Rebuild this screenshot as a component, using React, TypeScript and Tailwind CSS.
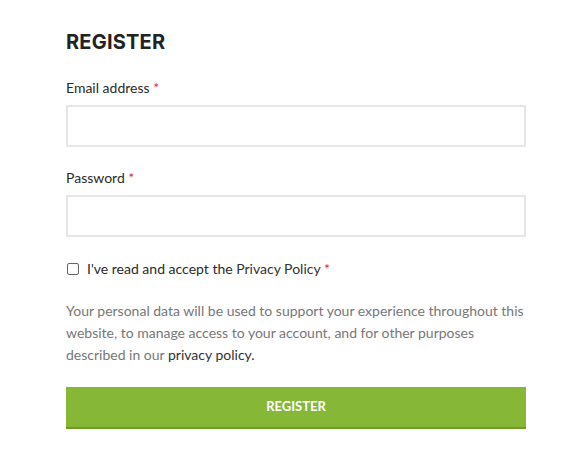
export default function App() {
  return (
    <div className="min-h-screen bg-white" style={{ fontFamily: "Lato, 'Open Sans', sans-serif" }}>
      <div className="ml-[66px] w-[460px] pt-[28px]">
        <h2
          className="text-[20px] font-bold leading-[28px] tracking-[0.2px] text-[#222]"
          style={{ fontFamily: "Inter, 'Noto Sans', sans-serif" }}
        >
          REGISTER
        </h2>

        <form className="mt-[22px]">
          <label className="block text-[14px] leading-[20px] text-[#2a2a2a]">
            Email address <span className="text-[#e0245e]">*</span>
          </label>
          <input
            type="email"
            className="mt-[7px] block h-[42px] w-full border-2 border-[#e6e6e6] bg-white px-3 outline-none"
          />

          <label className="mt-[21px] block text-[14px] leading-[20px] text-[#2a2a2a]">
            Password <span className="text-[#e0245e]">*</span>
          </label>
          <input
            type="password"
            className="mt-[7px] block h-[42px] w-full border-2 border-[#e6e6e6] bg-white px-3 outline-none"
          />

          <label className="mt-[22px] flex items-center gap-[8px] text-[14px] leading-[20px] text-[#2a2a2a]">
            <span className="ml-[1px] inline-block h-[12px] w-[12px] rounded-[2px] border border-[#666] bg-white" />
            <span>
              I've read and accept the <span className="text-[#333]">Privacy Policy</span>{" "}
              <span className="text-[#e0245e]">*</span>
            </span>
          </label>

          <p className="mt-[21px] text-[14px] leading-[22px] text-[#777]">
            Your personal data will be used to support your experience throughout this website, to manage access to
            your account, and for other purposes described in our <a className="text-[#333]">privacy policy.</a>
          </p>

          <button
            type="button"
            className="mt-[21px] block h-[42px] w-full border-b-2 border-[#6c9e26] bg-[#86b737] text-[13px] font-bold text-white"
          >
            REGISTER
          </button>
        </form>
      </div>
    </div>
  );
}
